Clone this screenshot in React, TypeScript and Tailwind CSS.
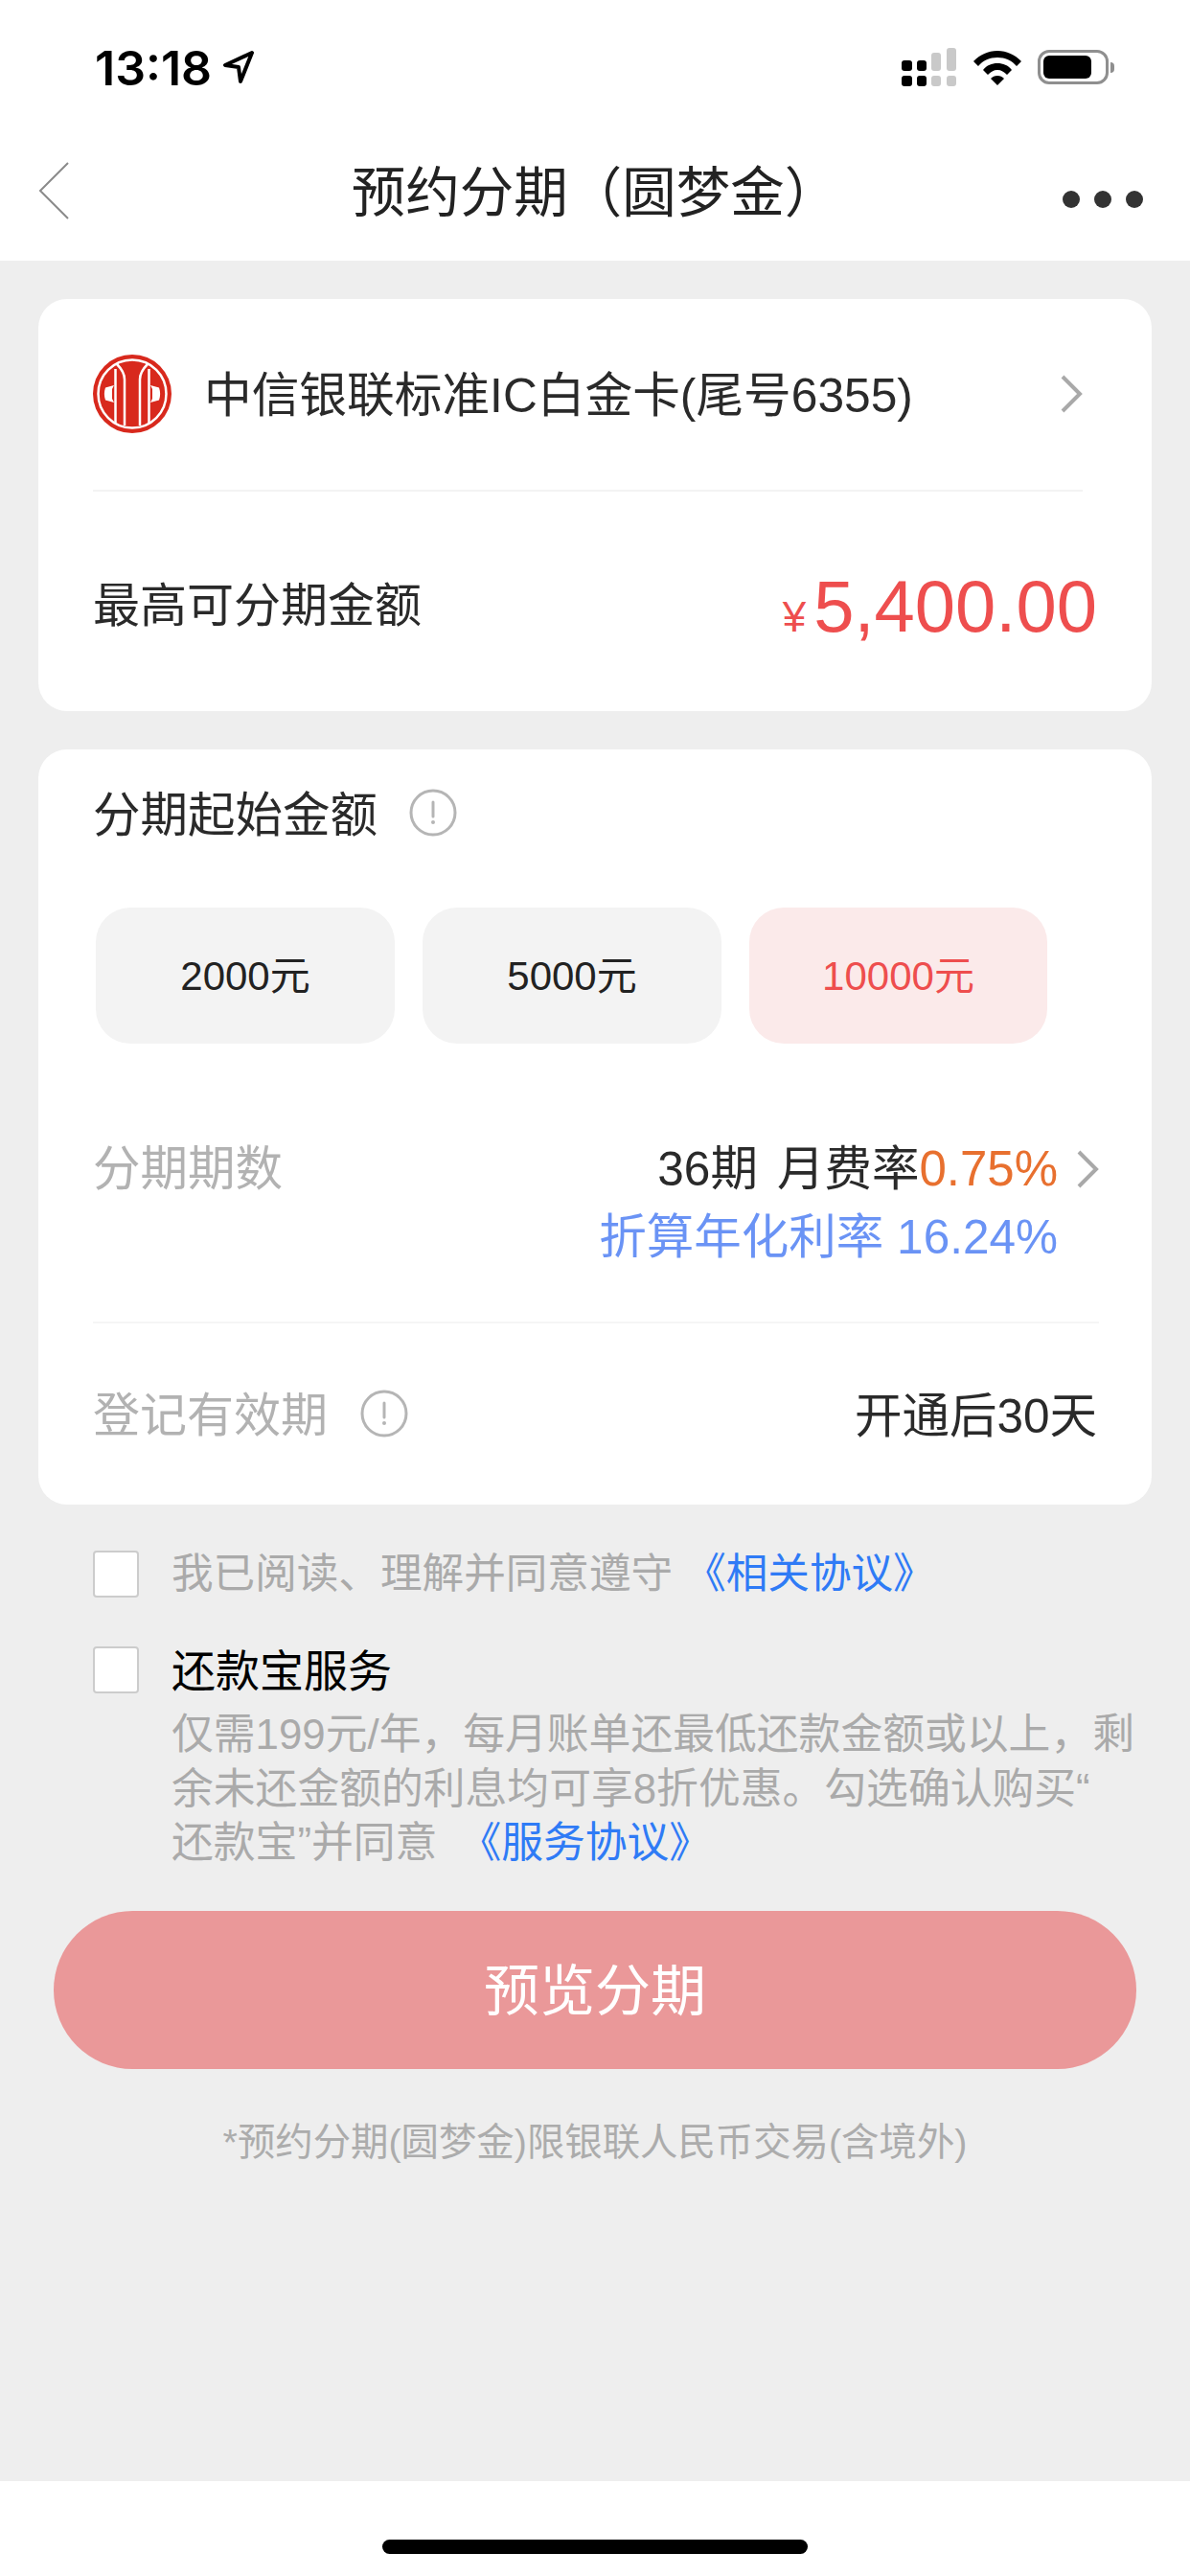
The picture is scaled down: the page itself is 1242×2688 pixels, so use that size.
const font = { fontFamily: '"Liberation Sans", "Noto Sans CJK SC", sans-serif' };

function InfoIcon() {
    return (
        <svg width="50" height="50" viewBox="0 0 50 50" fill="none">
            <circle cx="25" cy="25" r="23" stroke="#b5b5b5" strokeWidth="3" />
            <path d="M25 14v15" stroke="#b5b5b5" strokeWidth="3" strokeLinecap="round" />
            <circle cx="25" cy="35" r="2" fill="#b5b5b5" />
        </svg>
    );
}

function Chevron() {
    return (
        <svg width="24" height="40" viewBox="0 0 24 40" fill="none">
            <path d="M3 2l18 18L3 38" stroke="#a9a9a9" strokeWidth="4" />
        </svg>
    );
}

function CiticLogo() {
    return (
        <svg width="82" height="82" viewBox="0 0 82 82" fill="none">
            <circle cx="41" cy="41" r="41" fill="#d8291d" />
            <circle cx="41" cy="41" r="35.5" stroke="#fff" strokeWidth="2.5" />
            <path d="M33 74V26C33 19 29 14 25 10M49 74V26C49 19 53 14 57 10" stroke="#fff" strokeWidth="2.5" />
            <path d="M23.5 15V71M58.5 15V71" stroke="#fff" strokeWidth="2.5" />
            <path d="M22 32L13 34.5C11.5 39 11.5 43 13 47.5L22 50L20 46V36Z" fill="#fff" />
            <path d="M60 32L69 34.5C70.5 39 70.5 43 69 47.5L60 50L62 46V36Z" fill="#fff" />
        </svg>
    );
}

function StatusBar() {
    return (
        <div className="h-[132px] flex items-start justify-between">
            <div className="flex items-center pl-[99px] pt-[46px] gap-[8px]">
                <span className="text-[50px] leading-[50px] font-semibold text-black" style={{ fontFamily: 'Inter, sans-serif' }}>13:18</span>
                <svg width="40" height="40" viewBox="0 0 40 40" fill="none">
                    <path d="M34 4L6 17l14 2 2 15z" stroke="#000" strokeWidth="4" strokeLinejoin="round" />
                </svg>
            </div>
            <div className="flex items-start pt-[50px] pr-[79px]">
                <svg width="58" height="41" viewBox="0 0 58 41" className="mr-[17px]">
                    <rect x="0" y="13" width="11" height="11" rx="3" fill="#000" />
                    <rect x="0" y="29" width="11" height="11" rx="3" fill="#000" />
                    <rect x="16" y="13" width="10" height="11" rx="3" fill="#000" />
                    <rect x="16" y="29" width="10" height="11" rx="3" fill="#000" />
                    <rect x="31" y="5" width="10" height="19" rx="3" fill="#c9c9c9" />
                    <rect x="31" y="29" width="10" height="11" rx="3" fill="#c9c9c9" />
                    <rect x="47" y="0" width="10" height="24" rx="3" fill="#c9c9c9" />
                    <rect x="47" y="29" width="10" height="11" rx="3" fill="#c9c9c9" />
                </svg>
                <svg width="50" height="36" viewBox="0 0 50 36" className="mt-[3px] mr-[17px]">
                    <path d="M25 0C15 0 7 4 0 11l5 5c5-6 12-9 20-9s15 3 20 9l5-5C43 4 35 0 25 0z" fill="#000" />
                    <path d="M25 13c-6 0-11 2-15 7l5 5c3-3 6-5 10-5s7 2 10 5l5-5c-4-5-9-7-15-7z" fill="#000" />
                    <path d="M25 26c-3 0-5 1-7 3l7 7 7-7c-2-2-4-3-7-3z" fill="#000" />
                </svg>
                <div className="flex items-center mt-[2px]">
                    <div className="w-[74px] h-[36px] rounded-[12px] border-[3px] border-[#8f8f8f] p-[3px] flex">
                        <div className="w-[50px] h-full rounded-[6px] bg-black" />
                    </div>
                    <div className="w-[4px] h-[11px] ml-[2px] rounded-r-full bg-[#8f8f8f]" />
                </div>
            </div>
        </div>
    );
}

function NavBar() {
    return (
        <div className="h-[140px] flex items-start">
            <div className="w-[200px] pl-[40px] pt-[37px]">
                <svg width="32" height="60" viewBox="0 0 32 60" fill="none">
                    <path d="M31 1L2 30l29 29" stroke="#8a8a8a" strokeWidth="2" />
                </svg>
            </div>
            <div className="flex-1 text-center text-[56.5px] leading-[140px] text-[#222]">预约分期（圆梦金）</div>
            <div className="w-[200px] pr-[49px] pt-[67px] flex justify-end gap-[15px]">
                <span className="w-[18px] h-[18px] rounded-full bg-[#333]" />
                <span className="w-[18px] h-[18px] rounded-full bg-[#333]" />
                <span className="w-[18px] h-[18px] rounded-full bg-[#333]" />
            </div>
        </div>
    );
}

export default function App() {
    return (
        <div className="w-[1242px] h-[2688px] bg-[#eeeeee] flex flex-col" style={font}>
            <div className="bg-white">
                <StatusBar />
                <NavBar />
            </div>

            <div className="flex-1 px-[40px] pt-[40px]">
                {/* card + limit */}
                <div className="h-[430px] bg-white rounded-[30px] pl-[57px] pr-[57px]">
                    <div className="h-[201px] flex items-center pb-[2px] border-b-2 border-[#f3f3f3] mr-[15px]">
                        <CiticLogo />
                        <span className="ml-[34px] pt-[6px] flex-1 text-[49.7px] text-[#2a2a2a]">中信银联标准IC白金卡(尾号6355)</span>
                        <Chevron />
                    </div>
                    <div className="h-[227px] flex items-center justify-between pt-[12px]">
                        <span className="text-[49px] text-[#2a2a2a]">最高可分期金额</span>
                        <span className="text-[#ee4e4e] flex items-baseline">
                            <span className="text-[44px] mr-[8px]">¥</span>
                            <span className="text-[76px]">5,400.00</span>
                        </span>
                    </div>
                </div>

                {/* options */}
                <div className="mt-[40px] h-[788px] bg-white rounded-[30px] pl-[57px] pr-[57px]">
                    <div className="h-[132px] flex items-center gap-[33px]">
                        <span className="pt-[6px] text-[49.5px] text-[#2a2a2a]">分期起始金额</span>
                        <InfoIcon />
                    </div>
                    <div className="mt-[33px] flex gap-[29px] pl-[3px]">
                        <div className="w-[312px] h-[142px] rounded-[36px] bg-[#f3f3f3] flex items-center justify-center text-[42px] text-[#222]">2000元</div>
                        <div className="w-[312px] h-[142px] rounded-[36px] bg-[#f3f3f3] flex items-center justify-center text-[42px] text-[#222]">5000元</div>
                        <div className="w-[311px] h-[142px] rounded-[36px] bg-[#fbeaea] flex items-center justify-center text-[42px] text-[#ee4e4e]">10000元</div>
                    </div>
                    <div className="mt-[95px] flex justify-between h-[197px] border-b-2 border-[#f5f5f5] -mr-[2px]">
                        <span className="text-[49.5px] leading-[71px] text-[#b2b2b2]">分期期数</span>
                        <div className="text-[49.5px] leading-[71px] text-right">
                            <div className="flex items-center justify-end">
                                <span className="text-[#2a2a2a]">36期</span>
                                <span className="ml-[20px] text-[#2a2a2a]">月费率</span>
                                <span className="text-[51px] text-[#e8702f]">0.75%</span>
                                <span className="ml-[19px] flex"><Chevron /></span>
                            </div>
                            <div className="text-[#6a93f5] pr-[43px]">折算年化利率 16.24%</div>
                        </div>
                    </div>
                    <div className="h-[188px] flex items-center justify-between">
                        <span className="flex items-center gap-[34px] text-[49px] text-[#b2b2b2]">
                            <span className="pt-[6px]">登记有效期</span>
                            <InfoIcon />
                        </span>
                        <span className="pt-[6px] text-[49.5px] text-[#2a2a2a]">开通后30天</span>
                    </div>
                </div>

                {/* agreements */}
                <div className="mt-[48px] flex pl-[57px]">
                    <div className="w-[48px] h-[49px] rounded-[4px] bg-white border-2 border-[#cccccc]" />
                    <div className="ml-[34px] text-[43.6px] leading-[49px] text-[#aaaaaa]">
                        我已阅读、理解并同意遵守<span className="ml-[12px] text-[#2f7bf6]">《相关协议》</span>
                    </div>
                </div>
                <div className="mt-[51px] flex pl-[57px]">
                    <div className="w-[48px] h-[49px] rounded-[4px] bg-white border-2 border-[#cccccc]" />
                    <div className="ml-[34px]">
                        <div className="pt-[2px] text-[46px] leading-[49px] text-black">还款宝服务</div>
                        <div className="mt-[13px] text-[43.8px] leading-[56.5px] text-[#aaaaaa] whitespace-nowrap">
                            仅需199元/年，每月账单还最低还款金额或以上，剩<br />
                            余未还金额的利息均可享8折优惠。勾选确认购买“<br />
                            还款宝”并同意<span className="ml-[23px] text-[#2f7bf6]">《服务协议》</span>
                        </div>
                    </div>
                </div>

                <div className="mt-[42px] mx-[16px] h-[165px] pt-[2px] rounded-full bg-[#ea9899] flex items-center justify-center text-[58px] text-white">预览分期</div>
                <div className="mt-[51px] text-center text-[39.4px] leading-[50px] text-[#acacac]">*预约分期(圆梦金)限银联人民币交易(含境外)</div>
            </div>

            <div className="h-[99px] bg-white flex justify-center pt-[61px]">
                <div className="w-[444px] h-[15px] rounded-full bg-black" />
            </div>
        </div>
    );
}
